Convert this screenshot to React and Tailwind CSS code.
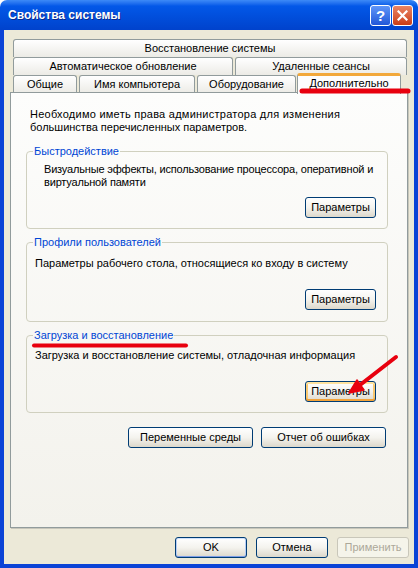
import clsx from "clsx";

const Tab = ({ children, className }) => (
    <div
        className={clsx(
            "h-[18px] flex items-center justify-center rounded-t-[3px] border border-b-0 border-[#919b9c] bg-linear-to-b from-white to-[#ecebe6] leading-none",
            className
        )}
    >
        {children}
    </div>
);

const XpButton = ({ children, className, focused, primary, disabled }) => (
    <button
        className={clsx(
            "h-[21px] rounded-[3px] border text-[11px] leading-none flex items-center justify-center",
            disabled
                ? "border-[#c9c7ba] bg-[#f5f4ea] text-[#aca899]"
                : "border-[#003c74] bg-linear-to-b from-white via-[#f4f3ee] to-[#dcd8cb] text-black",
            focused &&
                "shadow-[inset_0_2px_0_#ffe3a0,inset_0_-2px_0_#f2a33a,inset_2px_0_0_#f9c870,inset_-2px_0_0_#f9c870]",
            primary &&
                "shadow-[inset_0_1px_0_#cee0fb,inset_0_-1px_0_#7d9ee6,inset_1px_0_0_#b6cdf5,inset_-1px_0_0_#b6cdf5]",
            className
        )}
    >
        {children}
    </button>
);

const Group = ({ title, children, className, textClass, labelBg, buttonClass, focused }) => (
    <div
        className={clsx(
            "relative flex flex-col rounded-[4px] border border-[#d0d0bf]",
            className
        )}
    >
        <span
            className={clsx(
                "absolute left-[6px] -top-[7px] px-[1px] leading-[13px] text-[#0046d5]",
                labelBg
            )}
        >
            {title}
        </span>
        <div className={clsx("leading-[13px] whitespace-nowrap", textClass)}>
            {children}
        </div>
        <XpButton
            focused={focused}
            className={clsx("mt-auto self-end mr-[11px] w-[71px]", buttonClass)}
        >
            Параметры
        </XpButton>
    </div>
);

export default function App() {
    return (
        <div className="relative w-[418px] h-[568px] flex flex-col bg-white text-[11px] text-black font-['Liberation_Sans',Arial,sans-serif]">
            {/* title bar */}
            <div className="h-[30px] shrink-0 flex items-center pl-[8px] pr-[5px] rounded-t-[7px] bg-linear-to-b from-[#3d8af7] from-0% via-[#0358e8] via-20% to-[#0042cc] to-100%">
                <span className="text-white font-bold text-[12px] [text-shadow:1px_1px_#0d2a8c]">
                    Свойства системы
                </span>
                <div className="ml-auto flex gap-[1px]">
                    <div className="w-[21px] h-[21px] rounded-[3px] border border-white bg-linear-to-b from-[#5f95f8] to-[#2257d8] flex items-center justify-center text-white font-bold text-[15px] leading-none">
                        ?
                    </div>
                    <div className="w-[21px] h-[21px] rounded-[3px] border border-white bg-linear-to-b from-[#ea8463] to-[#c93b12] flex items-center justify-center">
                        <svg width="11" height="11" viewBox="0 0 11 11">
                            <path d="M1.5 1.5 L9.5 9.5 M9.5 1.5 L1.5 9.5" stroke="white" strokeWidth="2.2" strokeLinecap="square" />
                        </svg>
                    </div>
                </div>
            </div>

            {/* client area */}
            <div className="flex-1 flex flex-col bg-[#ece9d8] border-x-[4px] border-b-[4px] border-[#0b43d6]">
                <div className="pt-[9px] pl-[9px] flex flex-col">
                    <div className="flex">
                        <Tab className="w-[394px]">Восстановление системы</Tab>
                    </div>
                    <div className="flex gap-[2px]">
                        <Tab className="w-[220px]">Автоматическое обновление</Tab>
                        <Tab className="w-[172px]">Удаленные сеансы</Tab>
                    </div>
                    <div className="flex items-end gap-[2px] h-[18px]">
                        <Tab className="w-[64px]">Общие</Tab>
                        <Tab className="w-[116px]">Имя компьютера</Tab>
                        <Tab className="w-[99px]">Оборудование</Tab>
                        <div className="relative z-10 -ml-[1px] -mb-[1px] w-[104px] h-[21px] flex items-center justify-center pb-[3px] rounded-t-[3px] border border-b-0 border-[#919b9c] border-t-[3px] border-t-[#f2a83a] bg-[#fdfdfd] leading-none">
                            Дополнительно
                        </div>
                    </div>
                </div>

                {/* tab page */}
                <div className="ml-[6px] -mt-[1px] w-[398px] h-[436px] flex flex-col pl-[15px] border border-[#919b9c] shadow-[1px_1px_0_#c7c6bb] bg-linear-to-b from-[#fdfdfc] to-[#f3f2ec]">
                    <p className="pt-[15px] pl-[4px] leading-[13px] whitespace-nowrap">
                        <span className="tracking-[0.25px]">
                            Необходимо иметь права администратора для изменения
                        </span>
                        <br />
                        большинства перечисленных параметров.
                    </p>

                    <Group
                        title="Быстродействие"
                        className="mt-[17px] w-[362px] h-[78px]"
                        textClass="pt-[11px] pl-[17px] tracking-[-0.18px]"
                        labelBg="bg-[#fbfbfa]"
                        buttonClass="mb-[10px]"
                    >
                        Визуальные эффекты, использование процессора, оперативной и
                        <br />
                        виртуальной памяти
                    </Group>

                    <Group
                        title="Профили пользователей"
                        className="mt-[13px] w-[362px] h-[80px]"
                        textClass="pt-[14px] pl-[8px]"
                        labelBg="bg-[#f9f9f7]"
                        buttonClass="mb-[11px]"
                    >
                        Параметры рабочего стола, относящиеся ко входу в систему
                    </Group>

                    <Group
                        title="Загрузка и восстановление"
                        className="mt-[13px] w-[362px] h-[78px]"
                        textClass="pt-[13px] pl-[8px]"
                        labelBg="bg-[#f7f7f4]"
                        buttonClass="mb-[10px]"
                        focused
                    >
                        Загрузка и восстановление системы, отладочная информация
                    </Group>

                    <div className="mt-[14px] w-[362px] pr-[2px] flex justify-end gap-[8px]">
                        <XpButton className="w-[125px]">Переменные среды</XpButton>
                        <XpButton className="w-[125px]">Отчет об ошибках</XpButton>
                    </div>
                </div>

                <div className="mt-[9px] mr-[5px] flex justify-end gap-[9px]">
                    <XpButton primary className="w-[72px]">OK</XpButton>
                    <XpButton className="w-[72px]">Отмена</XpButton>
                    <XpButton disabled className="w-[72px]">Применить</XpButton>
                </div>
            </div>

            {/* red annotations */}
            <svg className="absolute inset-0 z-20 pointer-events-none" width="418" height="568" viewBox="0 0 418 568">
                <path d="M302 91 L408 91" stroke="#e8000e" strokeWidth="5" strokeLinecap="round" />
                <path d="M34 345.5 L186 345.5" stroke="#e8000e" strokeWidth="4" strokeLinecap="round" />
                <path d="M396 357 L360 385" stroke="#e8000e" strokeWidth="4" strokeLinecap="round" />
                <path d="M349 393 L364 390 L357 380 Z" fill="#e8000e" stroke="#e8000e" strokeWidth="1.5" strokeLinejoin="round" />
            </svg>
        </div>
    );
}
